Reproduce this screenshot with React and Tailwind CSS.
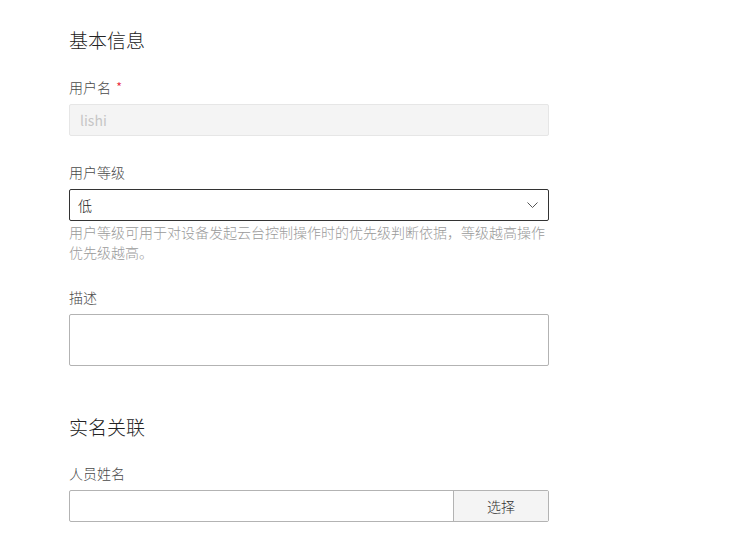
import React from 'react';

const font = { fontFamily: '"Microsoft YaHei", "Noto Sans CJK SC", sans-serif' };

const App = () => {
  return (
    <div className="min-h-[550px] w-[734px] bg-white pl-[69px] pt-[26px] text-[14px] text-[#333]" style={font}>
      <div className="w-[480px]">
        <h2 className="text-[19px] font-light leading-[28px] text-[#222]">基本信息</h2>

        <div className="mt-[23px]">
          <label className="block leading-[20px] font-light text-[#4a4a4a]">
            用户名 <span className="ml-[2px] text-[#e8112d]">*</span>
          </label>
          <input
            disabled
            value="lishi"
            readOnly
            className="mt-[7px] block h-[32px] w-full rounded-[2px] border border-[#e6e6e6] bg-[#f4f4f4] px-[10px] text-[#c6c6c6] outline-none"
          />
        </div>

        <div className="mt-[26px]">
          <label className="block leading-[20px] font-light text-[#4a4a4a]">用户等级</label>
          <div className="relative mt-[7px] flex h-[32px] items-center rounded-[2px] border border-[#333] px-[8px]">
            <span className="font-light text-[#222]">低</span>
            <svg className="absolute right-[10px] top-[12px]" width="11" height="7" viewBox="0 0 11 7" fill="none">
              <path d="M0.5 0.5L5.5 5.5L10.5 0.5" stroke="#555" strokeWidth="1" />
            </svg>
          </div>
          <p className="mt-px leading-[20px] font-light text-[#9a9a9a]">
            用户等级可用于对设备发起云台控制操作时的优先级判断依据，等级越高操作优先级越高。
          </p>
        </div>

        <div className="mt-[25px]">
          <label className="block leading-[20px] font-light text-[#4a4a4a]">描述</label>
          <textarea className="mt-[7px] block h-[52px] w-full resize-none rounded-[2px] border border-[#b3b3b3] px-[10px] outline-none" />
        </div>

        <h2 className="mt-[47px] text-[19px] font-light leading-[28px] text-[#222]">实名关联</h2>

        <div className="mt-[22px]">
          <label className="block leading-[20px] font-light text-[#4a4a4a]">人员姓名</label>
          <div className="mt-[7px] flex h-[32px] rounded-[2px] border border-[#b3b3b3]">
            <input className="min-w-0 flex-1 px-[10px] outline-none" />
            <button className="w-[95px] border-l border-[#b3b3b3] bg-[#f4f4f4] font-light text-[#333]">选择</button>
          </div>
        </div>
      </div>
    </div>
  );
};

export default App;
